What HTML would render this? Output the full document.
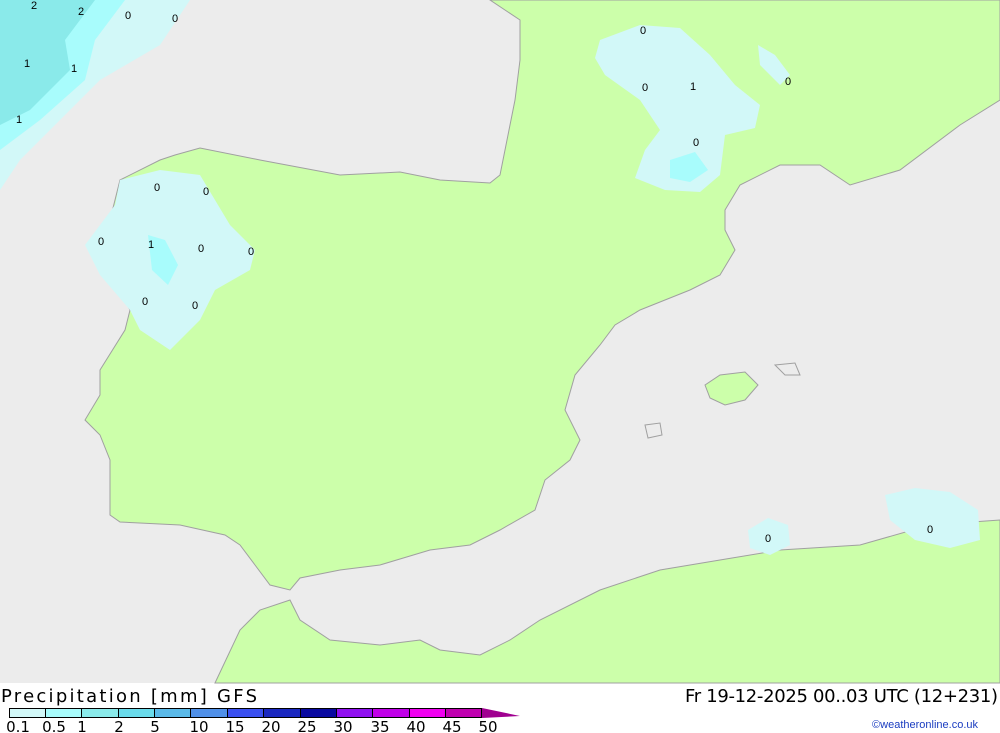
<!DOCTYPE html><html><head><style>body{margin:0;width:1000px;height:733px;overflow:hidden;background:#fff;font-family:"DejaVu Sans","Liberation Sans",sans-serif}</style></head><body>
<svg width="1000" height="733" xmlns="http://www.w3.org/2000/svg" style="position:absolute;left:0;top:0">
<rect width="1000" height="683" fill="#ececec"/>
<g stroke="#a0a0a0" stroke-width="1" fill="#ccffaa">
<path d="M175,155 L200,148 L260,160 L340,175 L400,172 L440,180 L490,183 L500,175 L505,150 L515,100 L520,60 L520,20 L490,0 L1000,0 L1000,100 L960,125 L900,170 L850,185 L820,165 L780,165 L740,185 L725,210 L725,230 L735,250 L720,275 L690,290 L640,310 L615,325 L600,345 L575,375 L565,410 L580,440 L570,460 L545,480 L535,510 L500,530 L470,545 L430,550 L380,565 L340,570 L300,578 L290,590 L270,585 L255,565 L240,545 L225,535 L180,525 L120,522 L110,515 L110,460 L100,435 L85,420 L100,395 L100,370 L125,330 L130,310 L120,290 L100,270 L95,250 L110,220 L120,180 L160,160 Z"/>
<path d="M215,683 L240,630 L260,610 L290,600 L300,620 L330,640 L380,645 L420,640 L440,650 L480,655 L510,640 L540,620 L600,590 L660,570 L720,560 L780,550 L860,545 L930,525 L1000,520 L1000,683 Z"/>
<path d="M705,385 L720,375 L745,372 L758,385 L745,400 L725,405 L710,398 Z"/>
<path d="M645,425 L660,423 L662,435 L648,438 Z" fill="#ececec"/>
<path d="M775,365 L795,363 L800,375 L785,375 Z" fill="#ececec"/>
</g>
<g stroke="none">
<path d="M0,0 L190,0 L160,45 L100,80 L60,120 L20,160 L0,190 Z" fill="#d2f8f8"/>
<path d="M0,0 L125,0 L95,40 L85,80 L40,120 L0,150 Z" fill="#a8fcfc"/>
<path d="M0,0 L95,0 L65,40 L70,70 L30,110 L0,125 Z" fill="#8aeaea"/>
<path d="M120,180 L160,170 L200,175 L230,225 L255,250 L250,270 L215,290 L200,320 L170,350 L140,330 L130,310 L100,275 L85,245 L100,225 L115,205 Z" fill="#d2f8f8"/>
<path d="M148,235 L165,240 L178,265 L168,285 L152,270 Z" fill="#a8fcfc"/>
<path d="M600,40 L640,25 L680,28 L710,55 L735,85 L760,105 L755,128 L725,135 L720,175 L700,192 L665,190 L635,178 L645,150 L660,130 L640,100 L605,75 L595,58 Z" fill="#d2f8f8"/>
<path d="M670,160 L695,152 L708,170 L690,182 L670,178 Z" fill="#a8fcfc"/>
<path d="M758,45 L775,55 L790,75 L780,85 L760,65 Z" fill="#d2f8f8"/>
<path d="M748,530 L768,518 L788,525 L790,545 L770,555 L750,548 Z" fill="#d2f8f8"/>
<path d="M885,495 L915,488 L950,492 L978,510 L980,540 L950,548 L915,540 L890,520 Z" fill="#d2f8f8"/>
</g>
<g font-size="11" fill="#000" font-family="Liberation Sans,sans-serif">
<text x="31" y="9">2</text><text x="78" y="15">2</text><text x="125" y="19">0</text><text x="172" y="22">0</text>
<text x="24" y="67">1</text><text x="71" y="72">1</text><text x="16" y="123">1</text>
<text x="154" y="191">0</text><text x="203" y="195">0</text><text x="98" y="245">0</text><text x="148" y="248">1</text><text x="198" y="252">0</text><text x="248" y="255">0</text><text x="142" y="305">0</text><text x="192" y="309">0</text>
<text x="640" y="34">0</text><text x="642" y="91">0</text><text x="690" y="90">1</text><text x="785" y="85">0</text><text x="693" y="146">0</text>
<text x="765" y="542">0</text><text x="927" y="533">0</text>
</g>
<text x="1" y="702" font-size="18" font-family="DejaVu Sans,sans-serif" fill="#000" textLength="256" lengthAdjust="spacing">Precipitation [mm] GFS</text>
<text x="685" y="702" font-size="18" font-family="DejaVu Sans,sans-serif" fill="#000" textLength="313" lengthAdjust="spacing">Fr 19-12-2025 00..03 UTC (12+231)</text>
<g stroke="#000" stroke-width="1">
<rect x="9.5" y="708.5" width="36" height="9" fill="#d2f8f8"/>
<rect x="45.5" y="708.5" width="36" height="9" fill="#a8fcfc"/>
<rect x="81.5" y="708.5" width="37" height="9" fill="#8aeaea"/>
<rect x="118.5" y="708.5" width="36" height="9" fill="#6adbeb"/>
<rect x="154.5" y="708.5" width="36" height="9" fill="#5ab9e8"/>
<rect x="190.5" y="708.5" width="37" height="9" fill="#5090e8"/>
<rect x="227.5" y="708.5" width="36" height="9" fill="#3a50f0"/>
<rect x="263.5" y="708.5" width="37" height="9" fill="#1a28c0"/>
<rect x="300.5" y="708.5" width="36" height="9" fill="#0a0aa0"/>
<rect x="336.5" y="708.5" width="36" height="9" fill="#9010f0"/>
<rect x="372.5" y="708.5" width="37" height="9" fill="#c000e8"/>
<rect x="409.5" y="708.5" width="36" height="9" fill="#f000f0"/>
<rect x="445.5" y="708.5" width="36" height="9" fill="#c000b0"/>
</g>
<path d="M482,708 L520,716 L482,718 Z" fill="#a00090"/>
<g font-size="15" font-family="DejaVu Sans,sans-serif" fill="#000" text-anchor="middle">
<text x="18" y="732">0.1</text><text x="54" y="732">0.5</text><text x="82" y="732">1</text><text x="119" y="732">2</text><text x="155" y="732">5</text><text x="199" y="732">10</text><text x="235" y="732">15</text><text x="271" y="732">20</text><text x="307" y="732">25</text><text x="343" y="732">30</text><text x="380" y="732">35</text><text x="416" y="732">40</text><text x="452" y="732">45</text><text x="488" y="732">50</text>
</g>
<text x="978" y="728" font-size="11" text-anchor="end" fill="#1a3cc0" font-family="Liberation Sans,sans-serif">©weatheronline.co.uk</text>
</svg>
</body></html>
